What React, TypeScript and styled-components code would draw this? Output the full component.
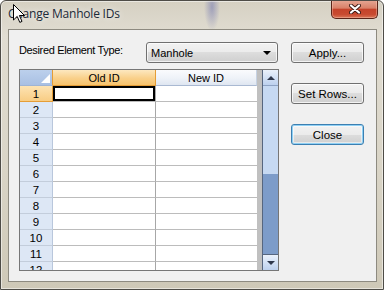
import styled, { createGlobalStyle } from "styled-components";

const GlobalStyle = createGlobalStyle`
  html, body { margin: 0; padding: 0; background: #ffffff; }
  #root { width: 384px; height: 290px; }
`;

const UI_FONT = `"Liberation Sans", Arial, sans-serif`;

//行データ（12行目は途中で切れる）
const rowNumbers = Array.from({ length: 12 }, (_, i) => i + 1);

const Window = styled.div`
  position: relative;
  width: 384px;
  height: 290px;
  box-sizing: border-box;
  border: 1px solid #4e4c47;
  border-radius: 6px 6px 0 0;
  display: flex;
  flex-direction: column;
  overflow: hidden;
  font-family: ${UI_FONT};
  background:
    radial-gradient(ellipse 8px 24px at 211px 6px, rgba(80, 88, 168, 0.42), rgba(80, 88, 168, 0) 100%),
    linear-gradient(180deg, #d5d0c2 0%, #e1ddd2 12%, #d9d4c6 60%, #cec8b7 100%);
  box-shadow: inset 0 0 0 1px rgba(255, 255, 255, 0.5);
`;

const TitleBar = styled.div`
  height: 28px;
  flex-shrink: 0;
  display: flex;
  align-items: flex-start;
  justify-content: space-between;
  padding: 0 5px 0 7px;
`;

const Title = styled.span`
  margin-top: 5px;
  font-family: "Segoe UI", "Open Sans", sans-serif;
  font-size: 12px;
  letter-spacing: -0.2px;
  line-height: 16px;
  color: #1c2a38;
  text-shadow: 0 0 6px rgba(255, 255, 255, 0.9);
`;

const CaptionClose = styled.div`
  margin-top: -1px;
  width: 47px;
  height: 19px;
  box-sizing: border-box;
  border: 1px solid #5a2418;
  border-top: none;
  border-radius: 0 0 5px 5px;
  display: flex;
  align-items: center;
  justify-content: center;
  background: linear-gradient(
    180deg,
    #e6a895 0%,
    #d98068 45%,
    #c5432a 52%,
    #c84a30 80%,
    #da7657 100%
  );
  box-shadow: inset 0 0 0 1px rgba(255, 220, 205, 0.35);
`;

const Client = styled.div`
  flex: 1;
  min-height: 0;
  margin: 0 6px 7px 7px;
  padding: 12px 0 0 10px;
  border: 1px solid #8d8a80;
  background: #f0f0f0;
  display: grid;
  grid-template-columns: 260px 73px;
  column-gap: 12px;
  align-items: start;
`;

const LeftColumn = styled.div`
  display: flex;
  flex-direction: column;
  gap: 6px;
`;

const TypeRow = styled.div`
  height: 21px;
  display: flex;
  align-items: flex-start;
  justify-content: space-between;
`;

const Label = styled.span`
  padding-top: 2px;
  font-size: 11px;
  letter-spacing: -0.35px;
  line-height: 13px;
  color: #000;
`;

const Select = styled.div`
  width: 132px;
  height: 21px;
  margin-right: 1px;
  box-sizing: border-box;
  border: 1px solid #707070;
  border-radius: 3px;
  padding: 0 6px 0 4px;
  display: flex;
  align-items: center;
  justify-content: space-between;
  font-size: 11px;
  color: #000;
  background: linear-gradient(180deg, #f2f2f2 0%, #ebebeb 50%, #dddddd 50%, #cfcfcf 100%);
  box-shadow: inset 0 0 0 1px rgba(255, 255, 255, 0.7);
`;

const SelectArrow = styled.span`
  width: 0;
  height: 0;
  border-left: 4px solid transparent;
  border-right: 4px solid transparent;
  border-top: 4px solid #000;
`;

const DataGrid = styled.div`
  width: 260px;
  height: 202px;
  box-sizing: border-box;
  border: 1px solid #767676;
  display: flex;
  background: #bfbfbf;
`;

const DataArea = styled.div`
  width: 237px;
  height: 200px;
  overflow: hidden;
  flex-shrink: 0;
  background: #ffffff;
`;

const GridRow = styled.div`
  display: grid;
  grid-template-columns: 33px 103px 101px;
  height: 16px;
`;

type HeadTone = "corner" | "active" | "plain";

const headBackground: Record<HeadTone, string> = {
  corner: "linear-gradient(180deg, #bcd0ec 0%, #a9c0e3 100%)",
  active: "linear-gradient(180deg, #fde8c0 0%, #f9d08a 55%, #f7c36c 100%)",
  plain: "linear-gradient(180deg, #fafbfd 0%, #eef2f8 55%, #dfe6f1 100%)",
};

const HeadCell = styled.div<{ $tone: HeadTone }>`
  position: relative;
  box-sizing: border-box;
  border-bottom: 1px solid ${({ $tone }) => ($tone === "plain" ? "#a9b9d2" : $tone === "active" ? "#e59d36" : "#9fb4d4")};
  border-right: 1px solid ${({ $tone }) => ($tone === "plain" ? "#c6d2e3" : "#e59d36")};
  background: ${({ $tone }) => headBackground[$tone]};
  padding-top: 1px;
  font-size: 11px;
  line-height: 14px;
  text-align: center;
  color: #000;
  overflow: hidden;
`;

//左上コーナーの白い三角
const CornerMark = styled.span`
  position: absolute;
  right: 2px;
  bottom: 2px;
  width: 0;
  height: 0;
  border-left: 9px solid transparent;
  border-bottom: 9px solid #ffffff;
`;

const RowHead = styled.div<{ $active: boolean }>`
  box-sizing: border-box;
  padding-top: 1px;
  border-bottom: 1px solid ${({ $active }) => ($active ? "#e59d36" : "#c3cddb")};
  border-right: 1px solid ${({ $active }) => ($active ? "#e59d36" : "#b9c7dc")};
  background: ${({ $active }) =>
    $active ? "linear-gradient(180deg, #fde3b3 0%, #f8cd84 100%)" : "#dde7f5"};
  font-size: 11.5px;
  line-height: 14px;
  text-align: center;
  color: #000;
`;

const DataCell = styled.div<{ $current?: boolean; $divider?: boolean }>`
  box-sizing: border-box;
  border-bottom: 1px solid #bcbcbc;
  border-right: ${({ $divider }) => ($divider ? "1px solid #a7a7a7" : "none")};
  background: #ffffff;
  box-shadow: ${({ $current }) => ($current ? "inset 0 0 0 2px #000" : "none")};
`;

const Gutter = styled.div`
  width: 5px;
  flex-shrink: 0;
  background: #c0c0c0;
`;

const ScrollBar = styled.div`
  width: 16px;
  flex-shrink: 0;
  box-sizing: border-box;
  border-left: 1px solid #56667f;
  display: flex;
  flex-direction: column;
  background: #c6d9f2;
`;

const ScrollButton = styled.div<{ $down?: boolean }>`
  height: 16px;
  flex-shrink: 0;
  box-sizing: border-box;
  display: flex;
  align-items: center;
  justify-content: center;
  border-top: ${({ $down }) => ($down ? "1px solid #56667f" : "none")};
  border-bottom: ${({ $down }) => ($down ? "none" : "1px solid #8ea3c4")};
  background: linear-gradient(180deg, #eaf1fb 0%, #d3e1f5 50%, #bdd1ee 100%);
`;

const ScrollArrow = styled.span<{ $down?: boolean }>`
  width: 0;
  height: 0;
  border-left: 4px solid transparent;
  border-right: 4px solid transparent;
  ${({ $down }) => ($down ? "border-top: 4px solid #2f384c;" : "border-bottom: 4px solid #2f384c;")}
`;

const ScrollTrack = styled.div`
  flex: 1;
  display: flex;
  flex-direction: column;
  justify-content: flex-end;
`;

const ScrollThumb = styled.div`
  height: 80px;
  background: #7d9cc9;
`;

const ButtonColumn = styled.div`
  display: flex;
  flex-direction: column;
  gap: 20px;
`;

const PushButton = styled.div<{ $focused?: boolean }>`
  height: 21px;
  box-sizing: border-box;
  border: 1px solid ${({ $focused }) => ($focused ? "#3c7fb1" : "#707070")};
  border-radius: 3px;
  display: flex;
  align-items: center;
  justify-content: center;
  font-size: 11.5px;
  color: #000;
  background: linear-gradient(180deg, #f2f2f2 0%, #ebebeb 50%, #dddddd 50%, #cfcfcf 100%);
  box-shadow: ${({ $focused }) =>
    $focused
      ? "inset 0 0 0 1px #8fd0f4, inset 0 0 0 2px rgba(255,255,255,0.5)"
      : "inset 0 0 0 1px rgba(255, 255, 255, 0.75)"};
`;

const Cursor = styled.svg`
  position: absolute;
  left: 12px;
  top: 3px;
`;

export default function App() {
  return (
    <>
      <GlobalStyle />
      <Window>
        <TitleBar>
          <Title>Change Manhole IDs</Title>
          <CaptionClose>
            <svg width="12" height="10" viewBox="0 0 12 10">
              <path d="M2 1.5 L10 8.5 M10 1.5 L2 8.5" stroke="#3b1a14" strokeWidth="4" strokeLinecap="round" />
              <path d="M2 1.5 L10 8.5 M10 1.5 L2 8.5" stroke="#ffffff" strokeWidth="2.2" strokeLinecap="round" />
            </svg>
          </CaptionClose>
        </TitleBar>
        <Client>
          <LeftColumn>
            <TypeRow>
              <Label>Desired Element Type:</Label>
              <Select>
                <span>Manhole</span>
                <SelectArrow />
              </Select>
            </TypeRow>
            <DataGrid>
              <DataArea>
                <GridRow>
                  <HeadCell $tone="corner">
                    <CornerMark />
                  </HeadCell>
                  <HeadCell $tone="active">Old ID</HeadCell>
                  <HeadCell $tone="plain">New ID</HeadCell>
                </GridRow>
                {rowNumbers.map((n) => (
                  <GridRow key={n}>
                    <RowHead $active={n === 1}>{n}</RowHead>
                    <DataCell $divider $current={n === 1} />
                    <DataCell />
                  </GridRow>
                ))}
              </DataArea>
              <Gutter />
              <ScrollBar>
                <ScrollButton>
                  <ScrollArrow />
                </ScrollButton>
                <ScrollTrack>
                  <ScrollThumb />
                </ScrollTrack>
                <ScrollButton $down>
                  <ScrollArrow $down />
                </ScrollButton>
              </ScrollBar>
            </DataGrid>
          </LeftColumn>
          <ButtonColumn>
            <PushButton>Apply...</PushButton>
            <PushButton>Set Rows...</PushButton>
            <PushButton $focused>Close</PushButton>
          </ButtonColumn>
        </Client>
        <Cursor width="13" height="20" viewBox="0 0 13 20">
          <path
            d="M0.5 0.5 V16 L4.2 12.4 L6.8 18.4 L9 17.4 L6.4 11.5 H11.5 Z"
            fill="#ffffff"
            stroke="#000000"
            strokeWidth="1"
            strokeLinejoin="miter"
          />
        </Cursor>
      </Window>
    </>
  );
}
